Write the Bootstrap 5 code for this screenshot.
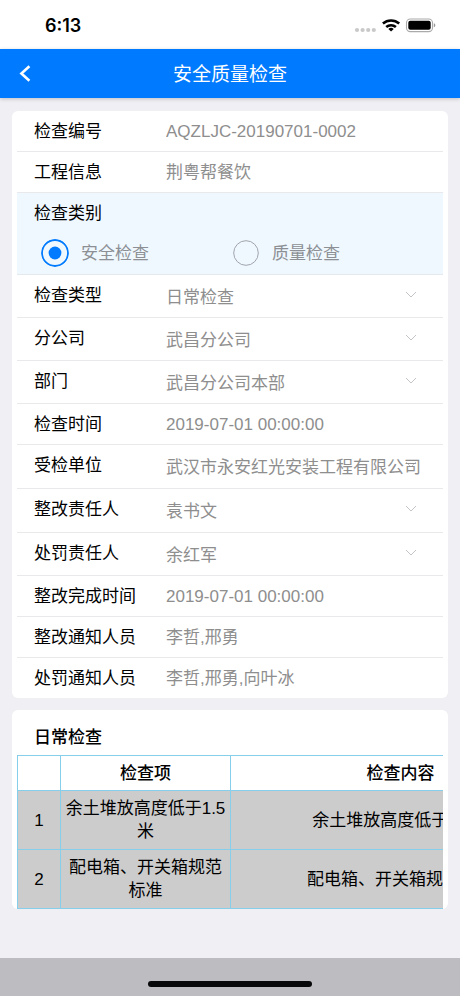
<!DOCTYPE html>
<html lang="zh-CN">
<head>
<meta charset="utf-8">
<meta name="viewport" content="width=device-width, initial-scale=1">
<title>安全质量检查</title>
<link href="https://cdn.jsdelivr.net/npm/bootstrap@5.3.0/dist/css/bootstrap.min.css" rel="stylesheet">
<style>
  body {
    background: #efeff4;
    color: #000;
    font-family: "Liberation Sans", "Noto Sans CJK SC", sans-serif;
    font-size: 17px;
    line-height: 23px;
  }
  .status-bar { height: 49px; padding: 2px 24px 0 45px; }
  .clock { font: 600 18px/24px Inter, sans-serif; }
  .app-bar {
    height: 49px;
    background: #007aff;
    box-shadow: 0 1px 4px rgba(0, 0, 0, .2);
    display: grid;
    grid-template-columns: 50px 1fr 50px;
  }
  .app-title { font-size: 19px; line-height: 26px; font-weight: 400; padding-top: 2px; }
  .panel { background: #fff; border-radius: 6px; margin: 12px 12px 0; padding: 0 5px; }
  .panel-first { margin-top: 13px; }
  .field { display: flex; align-items: flex-start; min-height: 41px; padding: 2px 0 0 17px; border-bottom: 1px solid #e9e9ec; }
  .field:last-child { border-bottom: 0; min-height: 40px; }
  .field-label { width: 132px; flex: none; line-height: 38px; }
  .field .form-control-plaintext, .field .form-select {
    flex: 1;
    min-width: 0;
    padding: 0;
    color: #8e8e8e;
    font-size: 17px;
    line-height: 38px;
    height: 38px;
    border: 0;
    border-radius: 0;
    outline: 0;
  }
  .field .form-select {
    height: 40px;
    padding: 2px 16px 0 0;
    background: url("data:image/svg+xml,%3Csvg xmlns='http://www.w3.org/2000/svg' viewBox='0 0 12 8'%3E%3Cpath d='M1 1l5 5 5-5' fill='none' stroke='%23c4c4c8'/%3E%3C/svg%3E") no-repeat right 26px top 14px / 12px 8px;
  }
  .field-staff { min-height: 44px; }
  .kind { margin: 0; padding: 0 0 0 17px; background: #f0f8ff; border-bottom: 1px solid #e4e9ee; }
  .kind legend { margin: 0; font-size: 17px; line-height: 42px; }
  .kind-options { clear: both; padding: 0 20px 3px 7px; }
  .kind .form-check-input {
    width: 28px; height: 28px; margin: 0; flex: none;
    border: 0;
    background: url("data:image/svg+xml,%3Csvg xmlns='http://www.w3.org/2000/svg' viewBox='0 0 28 28'%3E%3Ccircle cx='14' cy='14' r='12.3' fill='none' stroke='%23a0a4aa'/%3E%3C/svg%3E") center / 28px 28px;
  }
  .kind .form-check-input:checked {
    background-image: url("data:image/svg+xml,%3Csvg xmlns='http://www.w3.org/2000/svg' viewBox='0 0 28 28'%3E%3Ccircle cx='14' cy='14' r='13' fill='none' stroke='%23007aff' stroke-width='1.8'/%3E%3Ccircle cx='14' cy='14' r='6.4' fill='%23007aff'/%3E%3C/svg%3E");
  }
  .kind .form-check-label { padding: 2px 0 0 12px; line-height: 34px; color: #8c9095; }
  .panel-title { margin: 0; padding: 10px 0 0 17px; font-size: 17px; line-height: 35px; font-weight: 500; }
  .table-scroll { overflow: hidden; }
  .check-table { width: 554px; table-layout: fixed; border-collapse: collapse; text-align: center; border: 1px solid #87ceeb; }
  .check-table thead, .check-table tbody, .check-table tr { border-color: #87ceeb; }
  .check-table th, .check-table td { border: 1px solid #87ceeb; padding: 6px 4px; vertical-align: middle; }
  .check-table th { font-weight: 500; padding-bottom: 5px; }
  .check-table tbody { background: #ccc; }
  .col-no { width: 43px; }
  .col-item { width: 170px; }
  .home-bar { height: 38px; background: #bdbcc1; padding-top: 23px; }
  .home-pill { width: 164px; height: 6px; border-radius: 3px; background: #08080a; }
</style>
</head>
<body>
<div class="d-flex flex-column min-vh-100">
  <div class="status-bar bg-white d-flex align-items-center">
    <span class="clock me-auto">6:13</span>
    <svg width="82" height="18" viewBox="0 0 82 18" aria-hidden="true">
      <g fill="#c9c9c9"><circle cx="3" cy="13" r="2.1"/><circle cx="8.6" cy="13" r="2.1"/><circle cx="14.2" cy="13" r="2.1"/><circle cx="19.8" cy="13" r="2.1"/></g>
      <g fill="none" stroke="#000" stroke-width="2.5"><path d="M28.9 6.5a12.2 12.2 0 0 1 16.3 0"/><path d="M32.2 10a7.3 7.3 0 0 1 9.7 0"/></g>
      <path d="M37.05 14.6l-2.7-2.6a4 4 0 0 1 5.4 0z"/>
      <rect x="52.5" y="2" width="26" height="12.6" rx="3.8" fill="none" stroke="#aaa" stroke-width="1.1"/>
      <rect x="54.3" y="3.8" width="22.4" height="9" rx="2"/>
      <path d="M79.8 6.3c2 .6 2 3.4 0 4z" fill="#999"/>
    </svg>
  </div>
  <header class="app-bar text-white align-items-center position-relative">
    <button type="button" class="btn p-0 border-0 d-flex justify-content-center" aria-label="返回">
      <svg width="12" height="18" viewBox="0 0 12 18" fill="none" stroke="#fff" stroke-width="2.6"><path d="M10.4 1.2L2.4 8.5 10.4 15.8"/></svg>
    </button>
    <h1 class="app-title text-center mb-0">安全质量检查</h1>
  </header>

  <main class="flex-grow-1">
    <form class="panel panel-first">
      <div class="field"><label class="field-label" for="code">检查编号</label><input id="code" class="form-control-plaintext" readonly value="AQZLJC-20190701-0002"></div>
      <div class="field"><label class="field-label" for="project">工程信息</label><input id="project" class="form-control-plaintext" readonly value="荆粤帮餐饮"></div>
      <fieldset class="kind">
        <legend>检查类别</legend>
        <div class="kind-options row g-0">
          <div class="col-6 d-flex align-items-center"><input class="form-check-input" type="radio" name="kind" id="safe" checked><label class="form-check-label" for="safe">安全检查</label></div>
          <div class="col-6 d-flex align-items-center"><input class="form-check-input" type="radio" name="kind" id="quality"><label class="form-check-label" for="quality">质量检查</label></div>
        </div>
      </fieldset>
      <div class="field"><label class="field-label" for="type">检查类型</label><select id="type" class="form-select"><option>日常检查</option></select></div>
      <div class="field"><label class="field-label" for="branch">分公司</label><select id="branch" class="form-select"><option>武昌分公司</option></select></div>
      <div class="field"><label class="field-label" for="dept">部门</label><select id="dept" class="form-select"><option>武昌分公司本部</option></select></div>
      <div class="field"><label class="field-label" for="time">检查时间</label><input id="time" class="form-control-plaintext" readonly value="2019-07-01 00:00:00"></div>
      <div class="field field-staff"><label class="field-label" for="unit">受检单位</label><select id="unit" class="form-select"><option>武汉市永安红光安装工程有限公司</option></select></div>
      <div class="field field-staff"><label class="field-label" for="fixer">整改责任人</label><select id="fixer" class="form-select"><option>袁书文</option></select></div>
      <div class="field"><label class="field-label" for="fined">处罚责任人</label><select id="fined" class="form-select"><option>余红军</option></select></div>
      <div class="field"><label class="field-label" for="due">整改完成时间</label><input id="due" class="form-control-plaintext" readonly value="2019-07-01 00:00:00"></div>
      <div class="field"><label class="field-label" for="fixnote">整改通知人员</label><input id="fixnote" class="form-control-plaintext" readonly value="李哲,邢勇"></div>
      <div class="field"><label class="field-label" for="finenote">处罚通知人员</label><input id="finenote" class="form-control-plaintext" readonly value="李哲,邢勇,向叶冰"></div>
    </form>

    <section class="panel">
      <h2 class="panel-title">日常检查</h2>
      <div class="table-scroll">
        <table class="check-table">
          <colgroup><col class="col-no"><col class="col-item"><col></colgroup>
          <thead><tr><th></th><th>检查项</th><th>检查内容</th></tr></thead>
          <tbody>
            <tr><td>1</td><td>余土堆放高度低于1.5米</td><td>余土堆放高度低于1.5米</td></tr>
            <tr><td>2</td><td>配电箱、开关箱规范标准</td><td>配电箱、开关箱规范标准</td></tr>
          </tbody>
        </table>
      </div>
    </section>
  </main>

  <footer class="home-bar"><div class="home-pill mx-auto"></div></footer>
</div>
<script src="https://cdn.jsdelivr.net/npm/bootstrap@5.3.0/dist/js/bootstrap.bundle.min.js"></script>
</body>
</html>
